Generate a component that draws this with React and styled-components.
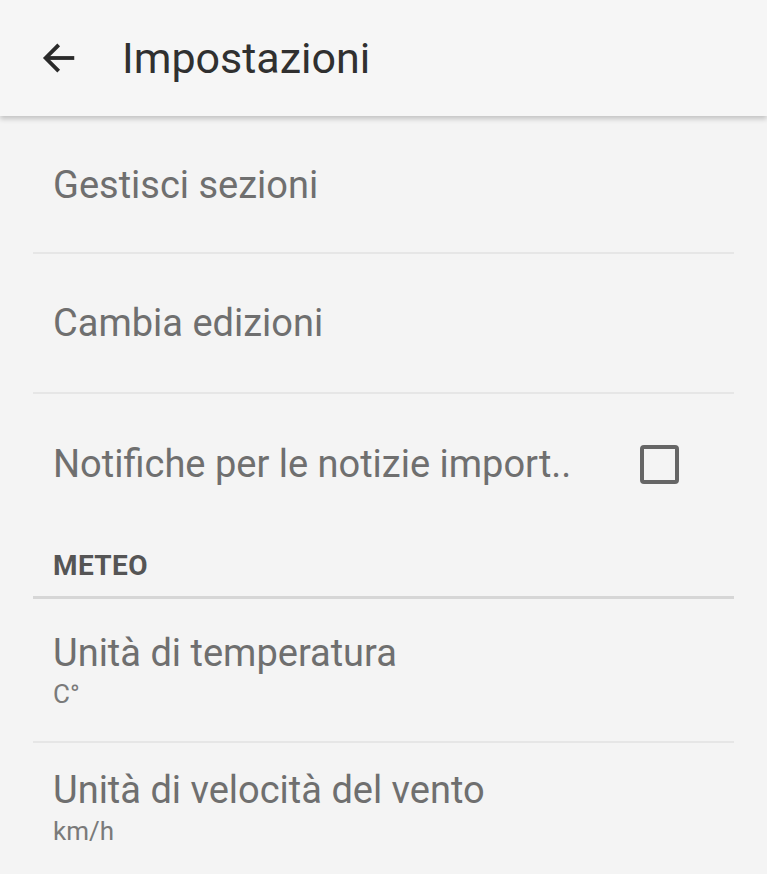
import React from 'react';
import styled, { createGlobalStyle } from 'styled-components';

const GlobalStyle = createGlobalStyle`
    html, body {
        margin: 0;
        padding: 0;
        background: #f4f4f4;
        font-family: Roboto, "Noto Sans", sans-serif;
    }
`

const Page = styled.div`
    width: 767px;
    min-height: 874px;
    background: #f4f4f4;
    overflow: hidden;
`

const Header = styled.header`
    height: 116px;
    display: flex;
    align-items: center;
    padding-left: 38px;
    gap: 42px;
    background: #f6f6f6;
    box-shadow: 0 3px 5px rgba(0, 0, 0, 0.2);
    position: relative;
`

const BackButton = styled.button`
    width: 42px;
    height: 42px;
    padding: 0;
    border: none;
    background: none;
    display: flex;
    align-items: center;
    justify-content: center;
    color: #2a2a2a;
`

const Title = styled.h1`
    margin: 0;
    font-size: 43px;
    font-weight: 400;
    color: #303030;
    letter-spacing: 0;
`

const List = styled.div`
    padding: 2px 33px 0 33px;
`

const Row = styled.div`
    height: ${p => p.$height}px;
    display: flex;
    align-items: center;
    justify-content: space-between;
    padding: 0 55px 0 20px;
    border-bottom: ${p => (p.$divider ? '2px solid #e6e6e6' : 'none')};
`

const TextBlock = styled.div`
    display: flex;
    flex-direction: column;
    gap: 4px;
`

const Label = styled.span`
    font-size: 38px;
    color: #6f6f6f;
    white-space: nowrap;
`

const Sub = styled.span`
    font-size: 26px;
    color: #7a7a7a;
`

const Checkbox = styled.span`
    width: 31px;
    height: 31px;
    border: 4px solid #666;
    border-radius: 4px;
`

const SectionHeader = styled.div`
    padding: 15px 20px 14px;
    font-size: 28px;
    font-weight: 700;
    letter-spacing: 0.4px;
    color: #555;
    border-bottom: 3px solid #d6d6d6;
`

const ArrowIcon = () => (
    <svg width="40" height="40" viewBox="0 0 24 24" fill="none" stroke="currentColor" strokeWidth="2.3" strokeLinecap="square">
        <path d="M20 12H5" />
        <path d="M11 5l-7 7 7 7" />
    </svg>
)

const App = () => (
    <Page>
        <GlobalStyle />
        <Header>
            <BackButton aria-label="Indietro">
                <ArrowIcon />
            </BackButton>
            <Title>Impostazioni</Title>
        </Header>
        <List>
            <Row $height={134} $divider>
                <Label>Gestisci sezioni</Label>
            </Row>
            <Row $height={138} $divider>
                <Label>Cambia edizioni</Label>
            </Row>
            <Row $height={140}>
                <Label>Notifiche per le notizie import..</Label>
                <Checkbox />
            </Row>
            <SectionHeader>METEO</SectionHeader>
            <Row $height={142} $divider>
                <TextBlock>
                    <Label>Unità di temperatura</Label>
                    <Sub>C°</Sub>
                </TextBlock>
            </Row>
            <Row $height={128}>
                <TextBlock>
                    <Label>Unità di velocità del vento</Label>
                    <Sub>km/h</Sub>
                </TextBlock>
            </Row>
        </List>
    </Page>
)

export default App;
